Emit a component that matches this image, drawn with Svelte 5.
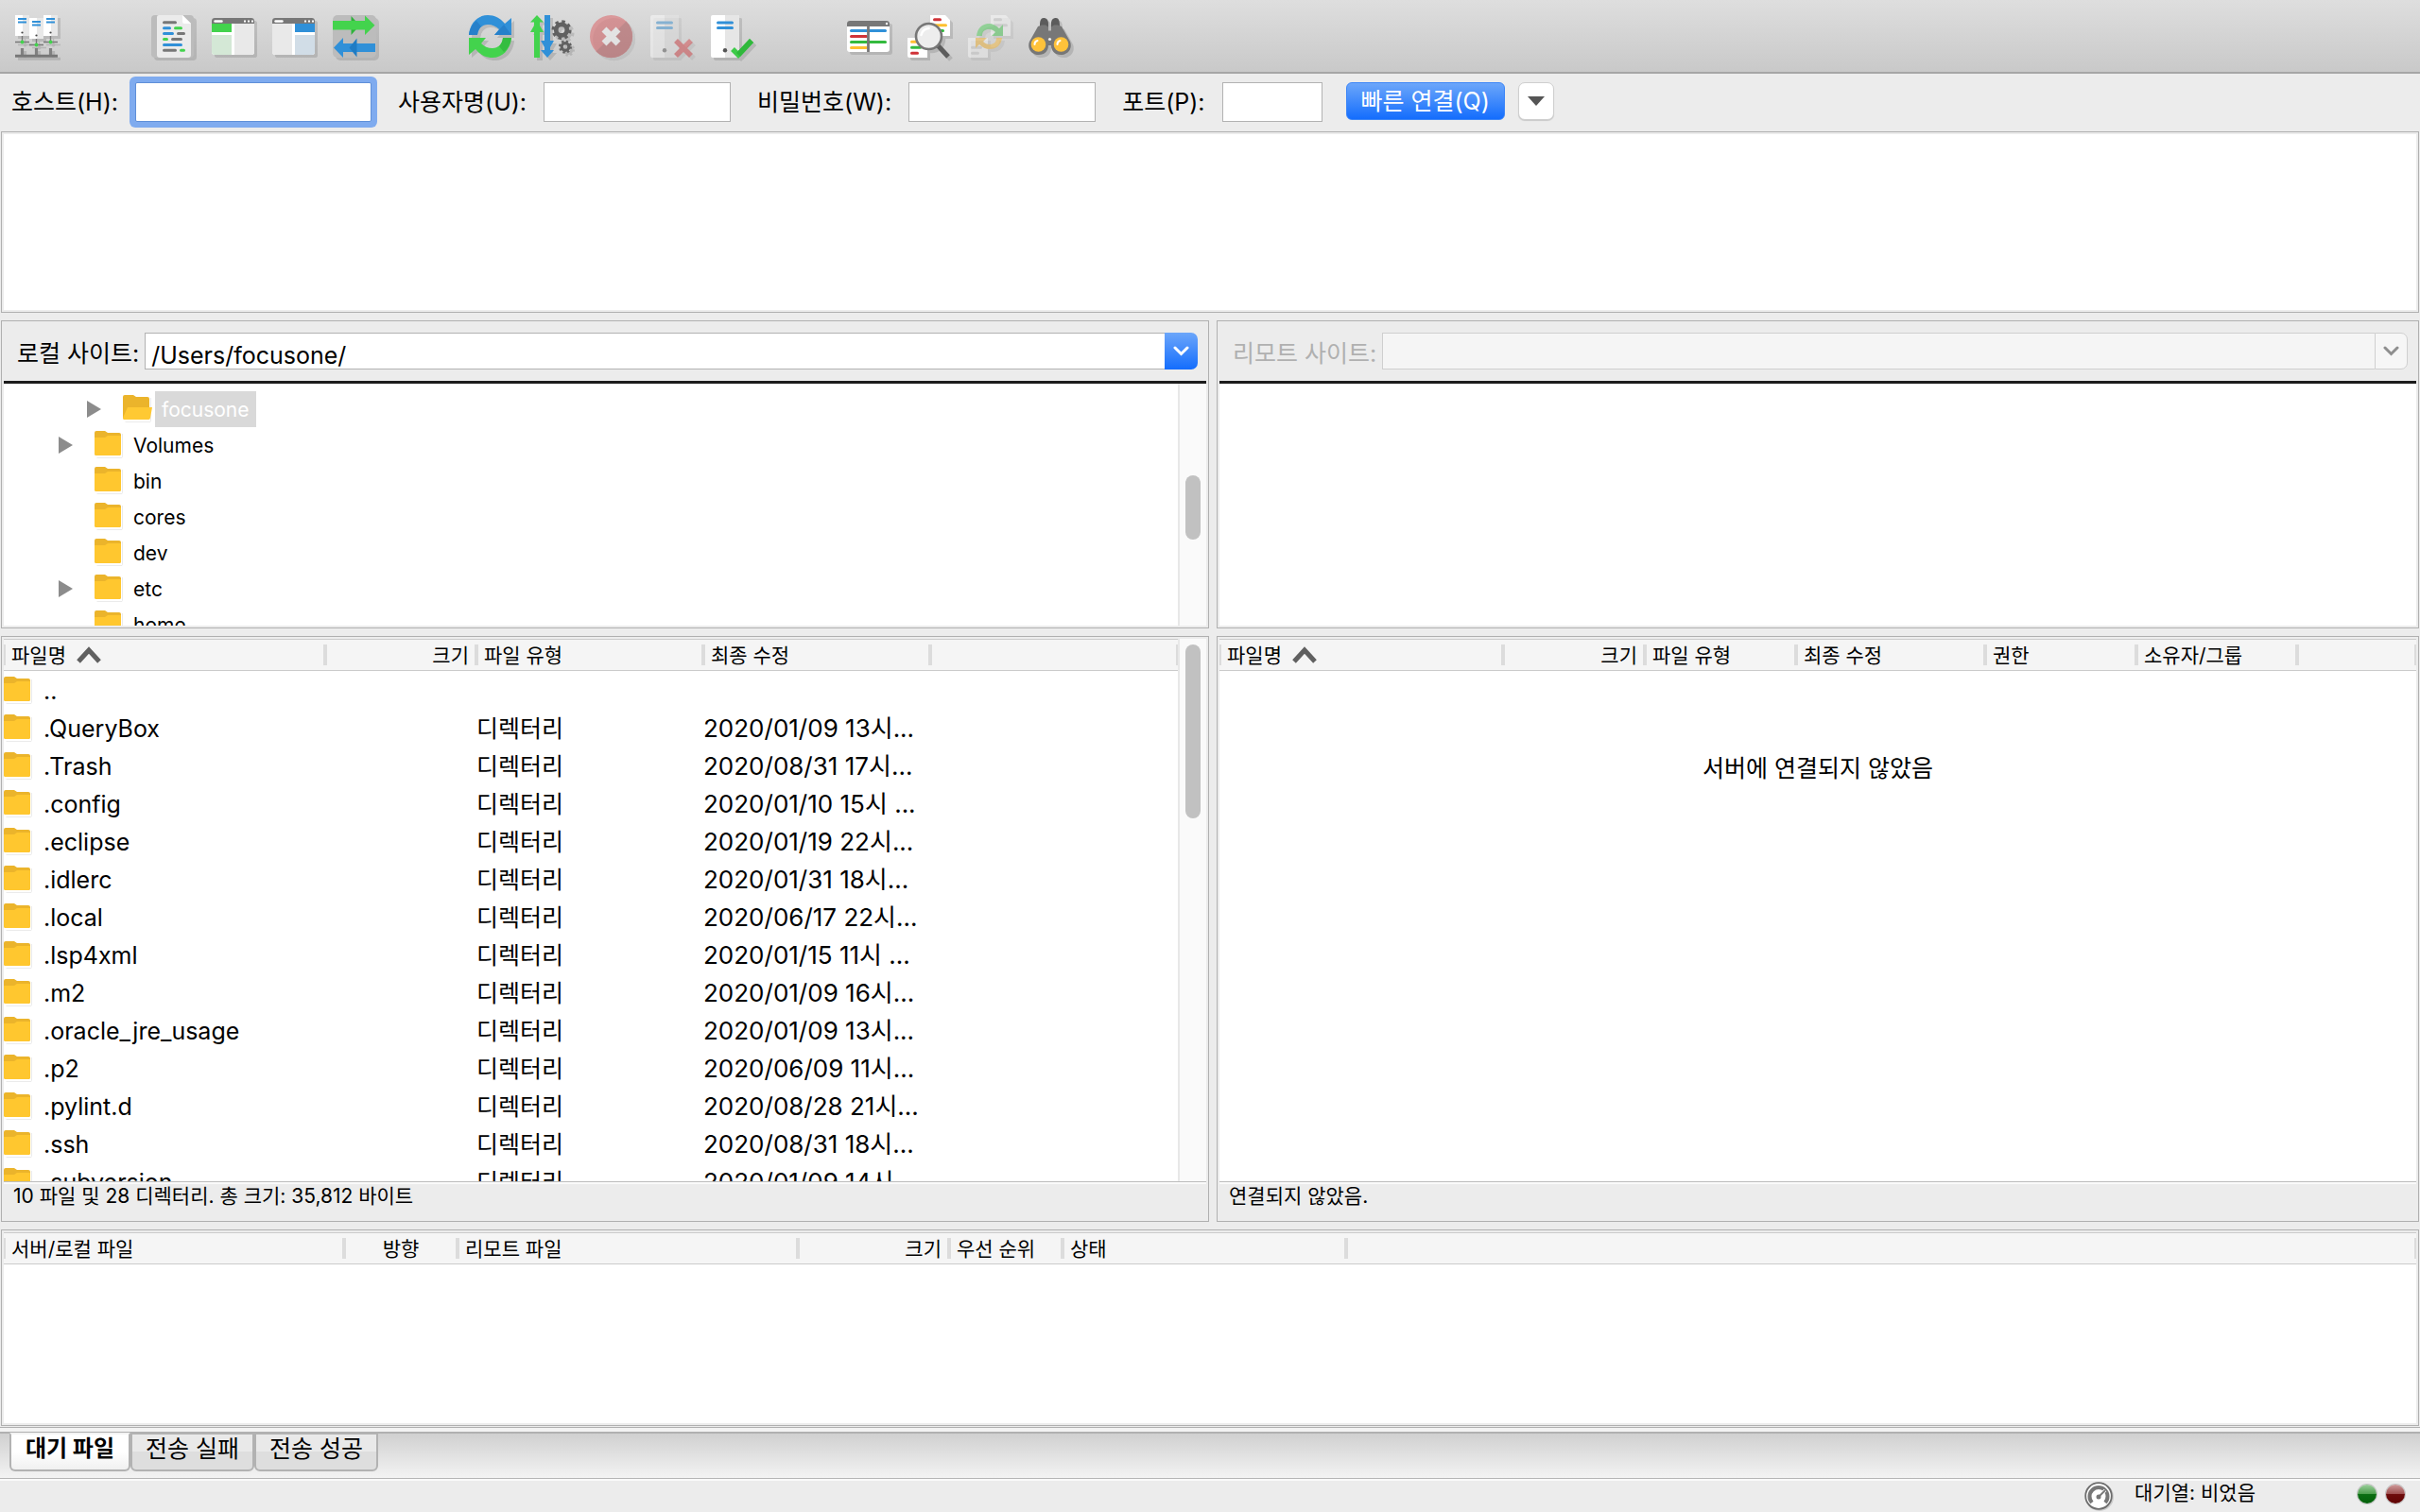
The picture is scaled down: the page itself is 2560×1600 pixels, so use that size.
<script>
  let host = $state('');
  let user = $state('');
  let password = $state('');
  let port = $state('');
  let localPath = $state('/Users/focusone/');
  let remotePath = $state('');
  let activeTab = $state(0);

  const toolGroups = [
    [{ icon: 'sites', label: '사이트 관리자' }],
    [
      { icon: 'log', label: '메시지 로그' },
      { icon: 'localTree', label: '로컬 디렉터리 트리' },
      { icon: 'remoteTree', label: '리모트 디렉터리 트리' },
      { icon: 'queue', label: '전송 대기열' }
    ],
    [
      { icon: 'refresh', label: '새로 고침' },
      { icon: 'process', label: '대기열 처리' },
      { icon: 'cancel', label: '취소', disabled: true },
      { icon: 'disconnect', label: '연결 끊기', disabled: true },
      { icon: 'reconnect', label: '다시 연결' }
    ],
    [
      { icon: 'filter', label: '필터' },
      { icon: 'compare', label: '디렉터리 비교' },
      { icon: 'syncBrowse', label: '동기화 탐색', disabled: true },
      { icon: 'find', label: '파일 검색' }
    ]
  ];

  const tree = [
    { name: 'focusone', depth: 2, expandable: true, selected: true },
    { name: 'Volumes', depth: 1, expandable: true },
    { name: 'bin', depth: 1 },
    { name: 'cores', depth: 1 },
    { name: 'dev', depth: 1 },
    { name: 'etc', depth: 1, expandable: true },
    { name: 'home', depth: 1 }
  ];

  const files = [
    { name: '..', type: '', date: '' },
    { name: '.QueryBox', type: '디렉터리', date: '2020/01/09 13시...' },
    { name: '.Trash', type: '디렉터리', date: '2020/08/31 17시...' },
    { name: '.config', type: '디렉터리', date: '2020/01/10 15시 ...' },
    { name: '.eclipse', type: '디렉터리', date: '2020/01/19 22시...' },
    { name: '.idlerc', type: '디렉터리', date: '2020/01/31 18시...' },
    { name: '.local', type: '디렉터리', date: '2020/06/17 22시...' },
    { name: '.lsp4xml', type: '디렉터리', date: '2020/01/15 11시 ...' },
    { name: '.m2', type: '디렉터리', date: '2020/01/09 16시...' },
    { name: '.oracle_jre_usage', type: '디렉터리', date: '2020/01/09 13시...' },
    { name: '.p2', type: '디렉터리', date: '2020/06/09 11시...' },
    { name: '.pylint.d', type: '디렉터리', date: '2020/08/28 21시...' },
    { name: '.ssh', type: '디렉터리', date: '2020/08/31 18시...' },
    { name: '.subversion', type: '디렉터리', date: '2020/01/09 14시...' }
  ];

  const localColumns = [
    { label: '파일명', width: 340, sorted: true },
    { label: '크기', width: 160, align: 'right' },
    { label: '파일 유형', width: 240 },
    { label: '최종 수정', width: 240 },
    { label: '' }
  ];

  const remoteColumns = [
    { label: '파일명', width: 300, sorted: true },
    { label: '크기', width: 150, align: 'right' },
    { label: '파일 유형', width: 160 },
    { label: '최종 수정', width: 200 },
    { label: '권한', width: 160 },
    { label: '소유자/그룹', width: 170 },
    { label: '' }
  ];

  const queueColumns = [
    { label: '서버/로컬 파일', width: 360 },
    { label: '방향', width: 120, align: 'center' },
    { label: '리모트 파일', width: 360 },
    { label: '크기', width: 160, align: 'right' },
    { label: '우선 순위', width: 120 },
    { label: '상태', width: 300 },
    { label: '' }
  ];

  const tabs = ['대기 파일', '전송 실패', '전송 성공'];
</script>

{#snippet gear(cx, cy, r)}
  <circle {cx} {cy} r={r * 0.55} fill="none" stroke="#606060" stroke-width={r * 0.45} />
  <circle {cx} {cy} r={r * 0.85} fill="none" stroke="#606060" stroke-width={r * 0.3}
    stroke-dasharray="{r * 0.33} {r * 0.3376}" />
{/snippet}

{#snippet toolIcon(name)}
  <svg class="tool-icon" width="48" height="48" viewBox="0 0 48 48" aria-hidden="true">
    {#if name === 'sites'}
      {#each [[0, 0], [30, 0], [15, 3]] as [x, y]}
        <path d="M{x} {y + 28.5}h15M{x + 7.5} {y + 22}v6" stroke="#777" stroke-width="1.4" />
        <path d="M{x} {y}h15v22h-15z" fill="#fff" />
        <path d="M{x + 8} {y}h7v22h-7z" fill="#e8e8e8" />
        <path d="M{x + 3} {y + 4}h9M{x + 3} {y + 7.5}h9" stroke="#3090d8" stroke-width="2" />
        <circle cx={x + 7.5} cy={y + 18.5} r="1.1" fill="#444" />
        <circle cx={x + 7.5} cy={y + 28.5} r="1.9" fill="#43d34d" />
        <path d="M{x + 7.5} 35v8" stroke="#808080" stroke-width="3.2" />
      {/each}
      <path d="M0 43.3h45" stroke="#777" stroke-width="3" />
    {:else if name === 'log'}
      <rect width="45" height="45" rx="4" fill="#bcbcbc" />
      <path d="M8 0h25l9 9v33a3 3 0 0 1-3 3H9a3 3 0 0 1-3-3V2a2 2 0 0 1 2-2z" fill="#ebebeb" />
      <path d="M33 0l9 9h-7a2 2 0 0 1-2-2z" fill="#fff" />
      <g fill="none" stroke-width="3" stroke-linecap="round">
        <path d="M13.5 7.7h12M28.500 19.600h6M22.500 25.500h9M13.500 37.300h12" stroke="#777" />
        <path d="M13.500 13.700h6M13.500 19.600h9M13.500 31.500h18" stroke="#3090d8" />
        <path d="M25.500 13.700h6M13.500 25.500h3M31.500 37.300h3" stroke="#43d34d" />
      </g>
    {:else if name === 'localTree' || name === 'remoteTree'}
      <rect y="3" width="45" height="39" rx="3" fill="#fff" />
      {#if name === 'localTree'}
        <path d="M0 9h21v9H0z" fill="#43d34d" />
        <path d="M0 21h21v21H3a3 3 0 0 1-3-3z" fill="#d4e8d6" />
        <path d="M24 9h21v30a3 3 0 0 1-3 3H24z" fill="#e9e9e9" />
      {:else}
        <path d="M24 9h21v9H24z" fill="#3090d8" />
        <path d="M24 21h21v18a3 3 0 0 1-3 3H24z" fill="#d1dde7" />
        <path d="M0 9h21v33H3a3 3 0 0 1-3-3z" fill="#e9e9e9" />
      {/if}
      <path d="M3 3h39a3 3 0 0 1 3 3v3H0V6a3 3 0 0 1 3-3z" fill="#777" />
      <path d="M3.500 6.500h7" stroke="#fff" stroke-width="2.400" stroke-linecap="round" />
      <path d="M34 6.500h2M38 6.500h2M42 6.500h2" stroke="#fff" stroke-width="2" />
    {:else if name === 'queue'}
      <rect width="46" height="45" rx="5" fill="#bcbcbc" />
      <path d="M19.500 1l9 10-9 10z" fill="#2fb23b" />
      <path d="M0 6h34V0.500l10.500 10.200L34 21v-5.500H0z" fill="#43d34d" />
      <path d="M45 30H11v-6L1 34.500 11 45v-6h34z" fill="#3090d8" />
      <path d="M25.500 24.500l-8 10 8 10z" fill="#1f7cc4" />
    {:else if name === 'refresh'}
      <path d="M0 21C1 8 10 0 20 0c7 0 13 3 18 9l7-6v18H27l5-6c-3-3-7-5-12-5-6 0-10 4-11 11z" fill="#3090d8" />
      <path d="M0 21C1 14 4 9 8 6l5 6c-2 2-4 5-4 9zM27 21l10-11 8 11z" fill="#2680ca" />
      <path d="M45 24c-1 13-10 21-20 21-7 0-13-3-18-9l-7 6V24h18l-5 6c3 3 7 5 12 5 6 0 10-4 11-11z" fill="#43d34d" />
      <path d="M45 24c-1 7-4 12-8 15l-5-6c2-2 4-5 4-9z" fill="#34bd40" />
    {:else if name === 'process'}
      <path d="M8 0l7 7.500h-4V11l4 7h-4v27H5V18H1l4-7V7.500H1z" fill="#43d34d" />
      <path d="M16 0h6v27h4l-4 7v3h4l-7 8-7-8h4v-3l-4-7h4z" fill="#3090d8" />
      {@render gear(34, 15.7, 10.5)}
      {@render gear(38, 33.5, 7)}
    {:else if name === 'cancel'}
      <g opacity=".5">
        <circle cx="22.500" cy="22.500" r="22.500" fill="#dc5a5e" />
        <path d="M38.500 6.500a22.500 22.500 0 0 1-32 32z" fill="#b44a4e" />
        <path d="M15 15l15 15M30 15L15 30" stroke="#fff" stroke-width="7" />
      </g>
    {:else if name === 'disconnect' || name === 'reconnect'}
      <g opacity={name === 'disconnect' ? 0.45 : 1}>
        <rect width="30" height="45" rx="2" fill="#fff" />
        <path d="M15 0h13a2 2 0 0 1 2 2v41a2 2 0 0 1-2 2H15z" fill="#e6e6e6" />
        <path d="M7.500 8h15M7.500 13.500h15" stroke="#3090d8" stroke-width="3" stroke-linecap="round" />
        <circle cx="15" cy="37.300" r="2.200" fill="#555" />
        {#if name === 'disconnect'}
          <path d="M27 27l16 16M43 27L27 43" stroke="#d2383c" stroke-width="5.500" />
        {:else}
          <path d="M23 36l6 6 14-15" fill="none" stroke="#3ecb49" stroke-width="5.500" />
          <path d="M29 42l14-15" stroke="#2fb83b" stroke-width="5.500" />
        {/if}
      </g>
    {:else if name === 'filter'}
      <rect y="6" width="45" height="33" rx="3" fill="#fff" />
      <path d="M3 6h39a3 3 0 0 1 3 3v3H0V9a3 3 0 0 1 3-3z" fill="#777" />
      <circle cx="42" cy="9" r="1.200" fill="#fff" />
      <g stroke-width="3" stroke-linecap="round">
        <path d="M4.500 16.500h36" stroke="#3090d8" />
        <path d="M4.500 22.500h16" stroke="#d03338" />
        <path d="M4.500 28.500h36" stroke="#33ba3e" />
        <path d="M4.500 34.500h16" stroke="#fdc030" />
      </g>
      <path d="M22.500 12v27" stroke="#777" stroke-width="2.800" />
    {:else if name === 'compare'}
      <path d="M24 0h16l5 5v17H24zM0 24h21v21H2a2 2 0 0 1-2-2z" fill="#fff" />
      <g stroke-width="3" stroke-linecap="round">
        <path d="M28.500 4.700h6M4.500 40.300h6" stroke="#d03338" />
        <path d="M28.500 10.700h12M4.500 28.300h5" stroke="#fdc030" />
        <path d="M28.500 16.500h9M4.500 34.300h9" stroke="#33ba3e" />
      </g>
      <path d="M31 31l12 13" stroke="#5c5c5c" stroke-width="5" />
      <circle cx="22.500" cy="22.500" r="13.500" fill="#ededed" stroke="#777" stroke-width="2.600" />
      <path d="M14.500 21a9 9 0 0 1 8-7" fill="none" stroke="#fff" stroke-width="2.500" stroke-linecap="round" />
    {:else if name === 'syncBrowse'}
      <g opacity=".42">
        <path d="M24 0h16l5 5v17H24zM0 24h21v21H2a2 2 0 0 1-2-2z" fill="#fff" />
        <path d="M28.500 4.700h6M28.500 10.700h12M4.500 34.300h9M4.500 40.300h6" stroke="#ccc" stroke-width="3" stroke-linecap="round" />
        <path d="M9 22c1-8 6-13 13-13 4 0 8 2 11 5l4-4v12H25l4-4c-2-2-4-3-7-3-4 0-7 2-7 7z" fill="#33c93f" />
        <path d="M36 24c-1 8-6 12-13 12-4 0-8-2-11-5l-4 4V24h12l-4 4c2 2 4 3 7 3 4 0 7-2 7-7z" fill="#fdb420" />
      </g>
    {:else}
      <path d="M12 11c0-5 1-8 4-8s5 2 5 6v5h-9zM24 14V9c0-4 2-6 5-6s4 3 4 8v3z" fill="#5c5c5c" />
      <path d="M10 12l4-1.500h4l3 2v4h3v-4l3-2h4l4 1.500 9 16c3 8-3 14-10 14-6 0-10-4-10-10h-3c0 6-4 10-10 10C4 42-2 36 1 28z" fill="#777" />
      <circle cx="10.500" cy="31" r="7.800" fill="#ffc23a" />
      <circle cx="34.500" cy="31" r="7.800" fill="#ffc23a" />
      <path d="M6.500 31a4 4 0 0 1 3-4M30.500 31a4 4 0 0 1 3-4" fill="none" stroke="#fff" stroke-width="2" stroke-linecap="round" />
      <circle cx="22.500" cy="25.500" r="1.600" fill="#eee" />
    {/if}
  </svg>
{/snippet}

{#snippet folder(open)}
  <svg class="folder" width="32" height="30" viewBox="0 0 32 30" aria-hidden="true">
    <path d="M2 28h27V3h1v24l-1 2H3z" fill="#ebebeb" />
    <path d="M0 2a2 2 0 0 1 2-2h9l3 2h12a2 2 0 0 1 2 2v20a2 2 0 0 1-2 2H2a2 2 0 0 1-2-2z" fill="#ebb42b" />
    {#if open}
      <path d="M5 13h26l-2 11a2 2 0 0 1-2 2H2a2 2 0 0 1-2-2z" fill="#ffc933" />
    {:else}
      <path d="M0 7h11l3-2h14v19a2 2 0 0 1-2 2H2a2 2 0 0 1-2-2z" fill="#ffc72f" />
    {/if}
  </svg>
{/snippet}

{#snippet chevron()}
  <svg width="17" height="12" viewBox="0 0 17 12" aria-hidden="true">
    <path d="M2 2l6.500 6.500L15 2" fill="none" stroke="currentColor" stroke-width="3" stroke-linecap="round" />
  </svg>
{/snippet}

{#snippet columns(cols)}
  <colgroup>
    {#each cols as col}
      <col style:width={col.width ? `${col.width}px` : null} />
    {/each}
  </colgroup>
  <thead>
    <tr>
      {#each cols as col}
        <th class={col.align}>
          {col.label}
          {#if col.sorted}
            <svg class="sort" width="28" height="20" viewBox="0 0 28 20" aria-hidden="true">
              <path d="M3 17L14 5l11 12" fill="none" stroke="#606060" stroke-width="5" />
            </svg>
          {/if}
        </th>
      {/each}
    </tr>
  </thead>
{/snippet}

<div class="app">
  <header class="toolbar">
    {#each toolGroups as group}
      <div class="tool-group">
        {#each group as tool}
          <button class="tool" aria-label={tool.label} disabled={tool.disabled}>
            {@render toolIcon(tool.icon)}
          </button>
        {/each}
      </div>
    {/each}
  </header>

  <form class="quickbar" onsubmit={(e) => e.preventDefault()}>
    <div class="field">
      <label for="host">호스트(H):</label>
      <input id="host" class="host focused" type="text" bind:value={host} />
    </div>
    <div class="field">
      <label for="user">사용자명(U):</label>
      <input id="user" type="text" bind:value={user} />
    </div>
    <div class="field">
      <label for="password">비밀번호(W):</label>
      <input id="password" type="password" bind:value={password} />
    </div>
    <div class="field">
      <label for="port">포트(P):</label>
      <input id="port" class="port" type="text" bind:value={port} />
    </div>
    <div class="connect">
      <button class="primary">빠른 연결(Q)</button>
      <button class="history" type="button" aria-label="최근 연결">
        <svg width="18" height="10" viewBox="0 0 18 10" aria-hidden="true"><path d="M0 0h18L9 10z" fill="#555" /></svg>
      </button>
    </div>
  </form>

  <main class="panes">
    <section class="pane wide" aria-label="로그">
      <div class="blank"></div>
    </section>

    <section class="pane">
      <div class="sitebar">
        <label for="local-path">로컬 사이트:</label>
        <div class="combo">
          <input id="local-path" type="text" bind:value={localPath} />
          <button aria-label="로컬 경로 목록">{@render chevron()}</button>
        </div>
      </div>
      <div class="scroll-area">
        <ul class="tree">
          {#each tree as node}
            <li class="node" class:deep={node.depth === 2}>
              <span class="twisty">
                {#if node.expandable}
                  <svg width="15" height="18" viewBox="0 0 15 18" aria-hidden="true"><path d="M0 0l15 9-15 9z" fill="#8c8c8c" /></svg>
                {/if}
              </span>
              {@render folder(node.selected)}
              <span class="node-name" class:selected={node.selected}>{node.name}</span>
            </li>
          {/each}
        </ul>
        <div class="track tree-track"><div class="thumb"></div></div>
      </div>
    </section>

    <section class="pane">
      <div class="sitebar disabled">
        <label for="remote-path">리모트 사이트:</label>
        <div class="combo">
          <input id="remote-path" type="text" bind:value={remotePath} disabled />
          <button aria-label="리모트 경로 목록" disabled>{@render chevron()}</button>
        </div>
      </div>
      <div class="blank"></div>
    </section>

    <section class="pane">
      <div class="scroll-area">
        <div class="list">
          <table>
            {@render columns(localColumns)}
            <tbody>
              {#each files as file}
                <tr>
                  <td><span class="file-name">{@render folder(false)}{file.name}</span></td>
                  <td></td>
                  <td>{file.type}</td>
                  <td class="date">{file.date}</td>
                  <td></td>
                </tr>
              {/each}
            </tbody>
          </table>
        </div>
        <div class="track list-track"><div class="thumb"></div></div>
      </div>
      <div class="pane-status">10 파일 및 28 디렉터리. 총 크기: 35,812 바이트</div>
    </section>

    <section class="pane">
      <div class="list">
        <table>
          {@render columns(remoteColumns)}
        </table>
        <p class="empty">서버에 연결되지 않았음</p>
      </div>
      <div class="pane-status">연결되지 않았음.</div>
    </section>

    <section class="pane wide">
      <div class="list">
        <table>
          {@render columns(queueColumns)}
        </table>
      </div>
    </section>
  </main>

  <div class="ribbon"></div>
  <nav class="tabs">
    {#each tabs as tab, i}
      <button class="tab" class:active={activeTab === i} onclick={() => (activeTab = i)}>{tab}</button>
    {/each}
  </nav>

  <footer class="statusbar">
    <svg width="32" height="32" viewBox="0 0 32 32" aria-hidden="true">
      <circle cx="16" cy="16" r="15" fill="#ccc" />
      <circle cx="15" cy="15" r="13.800" fill="#fff" stroke="#6e6e6e" stroke-width="1.800" />
      <path d="M8 22a9.500 9.500 0 1 1 14 0" fill="none" stroke="#777" stroke-width="4" />
      <path d="M15 16l7-7" stroke="#fff" stroke-width="3.500" />
      <path d="M15 16l7-7" stroke="#777" stroke-width="1.800" />
      <circle cx="15" cy="16" r="2.500" fill="#777" />
    </svg>
    <span class="queue-state">대기열: 비었음</span>
    <span class="led green"></span>
    <span class="led red"></span>
  </footer>
</div>

<style>
  :global(body) {
    margin: 0;
    background: #ececec;
  }

  .app {
    display: flex;
    flex-direction: column;
    height: 100vh;
    overflow: hidden;
    background: #ececec;
    color: #000;
    font-family: Inter, 'Noto Sans CJK KR', sans-serif;
    font-size: 25px;
    line-height: 38px;
  }

  button,
  input {
    box-sizing: border-box;
    margin: 0;
    padding: 0;
    border: none;
    border-radius: 0;
    outline: none;
    font: inherit;
    color: inherit;
  }

  svg {
    display: block;
    flex-shrink: 0;
  }

  .toolbar {
    display: flex;
    gap: 96px;
    height: 72px;
    padding: 4px 16px 0;
    background: linear-gradient(#dedede, #c9c9c9);
    border-bottom: 2px solid #a6a6a6;
  }

  .tool-group {
    display: flex;
    align-items: center;
    gap: 16px;
  }

  .tool {
    background: none;
  }

  .tool-icon {
    filter: drop-shadow(3px 3px 0 rgba(0, 0, 0, 0.12));
  }

  .quickbar {
    display: flex;
    gap: 28px;
    height: 42px;
    padding: 9px 12px 10px;
  }

  .field {
    display: flex;
    align-items: center;
    gap: 18px;
    white-space: nowrap;
  }

  .field input {
    width: 198px;
    height: 42px;
    padding: 0 6px;
    background: #fff;
    border: 1px solid #b2b2b2;
  }

  .field .host {
    width: 250px;
  }

  .field .port {
    width: 106px;
  }

  .field .focused {
    border-color: #5f8fd8;
    border-radius: 2px;
    box-shadow: 0 0 0 6px #7fabef;
  }

  .connect {
    display: flex;
    gap: 14px;
    margin-left: -3px;
  }

  .primary {
    width: 168px;
    height: 40px;
    background: linear-gradient(#6ca6fa, #146dfd);
    border: 1px solid #3d86f7;
    border-radius: 6px;
    color: #fff;
    line-height: 36px;
    white-space: nowrap;
  }

  .history {
    display: flex;
    align-items: center;
    justify-content: center;
    width: 38px;
    height: 40px;
    background: #fff;
    border: 1px solid #cfcfcf;
    border-radius: 7px;
    box-shadow: 0 1px 1px rgba(0, 0, 0, 0.15);
  }

  .panes {
    flex: 1;
    display: grid;
    grid-template-columns: minmax(0, 213fr) minmax(0, 212fr);
    grid-template-rows: minmax(0, 96fr) minmax(0, 163fr) minmax(0, 310fr) minmax(0, 104fr);
    gap: 8px;
    min-height: 0;
    padding: 0 1px;
  }

  .pane {
    display: flex;
    flex-direction: column;
    padding: 2px;
    border: 1px solid #b0b0b0;
    overflow: hidden;
  }

  .wide {
    grid-column: span 2;
  }

  .blank {
    flex: 1;
    background: #fff;
  }

  .sitebar {
    display: flex;
    align-items: center;
    gap: 6px;
    height: 39px;
    padding: 10px 9px 12px 14px;
    border-bottom: 3px solid #1c1c1c;
    white-space: nowrap;
  }

  .sitebar label {
    padding-top: 4px;
  }

  .combo {
    flex: 1;
    display: flex;
    height: 39px;
  }

  .combo input {
    flex: 1;
    min-width: 0;
    padding: 8px 6px 0;
    background: #fff;
    border: 1px solid #b2b2b2;
    border-right: none;
  }

  .combo button {
    display: flex;
    align-items: center;
    justify-content: center;
    width: 35px;
    background: linear-gradient(#6ca6fa, #146dfd);
    border-radius: 0 7px 7px 0;
    color: #fff;
  }

  .disabled label {
    color: #b0b0b0;
  }

  .disabled .combo input {
    background: #f5f5f5;
    border-color: #cfcfcf;
  }

  .disabled .combo button {
    background: #f6f6f6;
    border: 1px solid #cfcfcf;
    color: #8e8e8e;
  }

  .scroll-area {
    flex: 1;
    display: flex;
    min-height: 0;
    background: #fff;
  }

  .tree {
    flex: 1;
    margin: 0;
    padding: 8px 0 0;
    overflow: hidden;
    list-style: none;
    font-size: 21px;
  }

  .node {
    display: flex;
    align-items: center;
    height: 38px;
    padding-left: 58px;
  }

  .node.deep {
    padding-left: 88px;
  }

  .twisty {
    width: 15px;
    margin-right: 23px;
  }

  .node-name {
    margin-left: 2px;
    padding: 2px 7px 0;
    line-height: 36px;
  }

  .node-name.selected {
    background: #d9d9d9;
    color: #fff;
  }

  .track {
    box-sizing: border-box;
    width: 30px;
    padding: 0 6px;
    background: #fafafa;
    border-left: 2px solid #e8e8e8;
  }

  .thumb {
    width: 16px;
    border-radius: 8px;
    background: #c1c1c1;
  }

  .tree-track {
    padding-top: 97px;
  }

  .tree-track .thumb {
    height: 68px;
  }

  .list-track {
    padding-top: 6px;
  }

  .list-track .thumb {
    height: 184px;
  }

  .list {
    flex: 1;
    min-width: 0;
    min-height: 0;
    overflow: hidden;
    background: #fff;
  }

  table {
    width: 100%;
    table-layout: fixed;
    border-spacing: 0;
  }

  th {
    box-sizing: border-box;
    height: 34px;
    padding: 2px 8px 0;
    background:
      linear-gradient(#dcdcdc, #dcdcdc) left center / 2px 22px no-repeat,
      linear-gradient(#dcdcdc, #dcdcdc) right center / 2px 22px no-repeat,
      #f5f5f5;
    border-top: 1px solid #cbcbcb;
    border-bottom: 1px solid #cbcbcb;
    font-size: 21px;
    font-weight: 400;
    line-height: 30px;
    text-align: left;
    white-space: nowrap;
  }

  th.right {
    text-align: right;
  }

  th.center {
    text-align: center;
  }

  .sort {
    display: inline-block;
    margin-left: 4px;
    vertical-align: -2px;
  }

  td {
    box-sizing: border-box;
    height: 40px;
    padding: 2px 0 0;
    line-height: 38px;
    white-space: nowrap;
  }

  .date {
    font-size: 26px;
  }

  .file-name {
    display: flex;
    align-items: center;
    gap: 10px;
  }

  .empty {
    margin: 84px 0 0;
    text-align: center;
  }

  .pane-status {
    height: 39px;
    padding: 0 10px;
    border-top: 1px solid #bdbdbd;
    box-shadow: inset 0 2px 0 #fafafa;
    font-size: 21px;
    line-height: 30px;
  }

  .ribbon {
    height: 4px;
    margin-top: 1px;
    background: #f3f3f3;
    border-top: 1px solid #b0b0b0;
    border-bottom: 2px solid #b0b0b0;
  }

  .tabs {
    display: flex;
    height: 47px;
    padding: 0 10px;
    background: linear-gradient(#d0d0d0, #f3f3f3);
    border-bottom: 1px solid #b5b5b5;
    box-shadow: 0 2px 0 #fafafa;
  }

  .tab {
    min-width: 128px;
    height: 41px;
    margin-top: -1px;
    padding: 0 14px 8px;
    background: linear-gradient(#e9e9e9 50%, #dedede 50%);
    border: 2px solid #b2b2b2;
    border-radius: 0 0 6px 6px;
    line-height: 28px;
    white-space: nowrap;
  }

  .tab.active {
    background: linear-gradient(#fff 50%, #f0f0f0);
    border-top-color: #f3f3f3;
    font-size: 24px;
    font-weight: 700;
  }

  .statusbar {
    display: flex;
    align-items: flex-start;
    justify-content: flex-end;
    height: 32px;
    padding: 3px 16px 0 0;
    font-size: 21px;
    line-height: 24px;
  }

  .queue-state {
    margin: 0 98px 0 21px;
  }

  .led {
    width: 20px;
    height: 20px;
    margin: 3px 0 0 10px;
    border-radius: 50%;
    box-shadow: 0 0 0 1px #c4c4c4;
  }

  .led.green {
    background: linear-gradient(#9ccf9c, #4f9f4f 48%, #0b6e12 52%, #04600a);
  }

  .led.red {
    background: linear-gradient(#cf9c9c, #9f4f4f 48%, #6e0b0b 52%, #600404);
  }
</style>
